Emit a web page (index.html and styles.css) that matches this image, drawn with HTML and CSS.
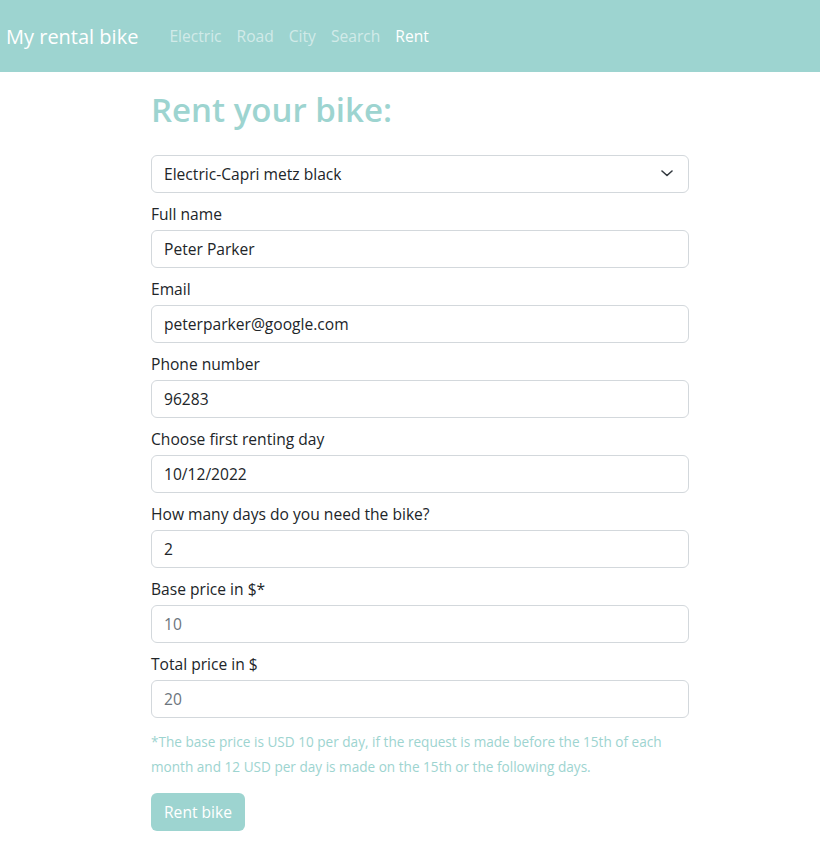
FILE: index.html
```html
<!DOCTYPE html>
<html lang="en">
<head>
<meta charset="utf-8">
<title>My rental bike</title>
<link rel="stylesheet" href="styles.css">
</head>
<body>
<nav class="navbar">
  <a class="brand" href="#">My rental bike</a>
  <ul class="nav-links">
    <li><a href="#">Electric</a></li>
    <li><a href="#">Road</a></li>
    <li><a href="#">City</a></li>
    <li><a href="#">Search</a></li>
    <li><a class="active" href="#">Rent</a></li>
  </ul>
</nav>
<main class="page">
  <h1 class="title">Rent your bike:</h1>
  <form class="form">
    <div class="select-box">
      <span>Electric-Capri metz black</span>
      <svg class="chevron" width="12" height="7" viewBox="0 0 12 7"><path d="M1 1l5 4.5L11 1" fill="none" stroke="#343a40" stroke-width="1.6" stroke-linecap="round" stroke-linejoin="round"/></svg>
    </div>
    <div class="group">
      <label class="label">Full name</label>
      <div class="input">Peter Parker</div>
    </div>
    <div class="group">
      <label class="label">Email</label>
      <div class="input">peterparker@google.com</div>
    </div>
    <div class="group">
      <label class="label">Phone number</label>
      <div class="input">96283</div>
    </div>
    <div class="group">
      <label class="label">Choose first renting day</label>
      <div class="input">10/12/2022</div>
    </div>
    <div class="group">
      <label class="label">How many days do you need the bike?</label>
      <div class="input">2</div>
    </div>
    <div class="group">
      <label class="label">Base price in $*</label>
      <div class="input readonly">10</div>
    </div>
    <div class="group">
      <label class="label">Total price in $</label>
      <div class="input readonly">20</div>
    </div>
    <p class="note">*The base price is USD 10 per day, if the request is made before the 15th of each month and 12 USD per day is made on the 15th or the following days.</p>
    <button type="button" class="btn">Rent bike</button>
  </form>
</main>
</body>
</html>
```
FILE: styles.css
```css
* { box-sizing: border-box; }
body {
  margin: 0;
  font-family: "Open Sans", "Noto Sans", sans-serif;
  font-size: 15.6px;
  color: #212529;
  background: #fff;
}
.navbar {
  height: 72px;
  background: #9dd4d0;
  display: flex;
  align-items: center;
  padding: 0 6px;
}
.brand {
  color: #fff;
  font-size: 20px;
  text-decoration: none;
  margin-right: 31px;
}
.nav-links {
  list-style: none;
  margin: 0;
  padding: 0;
  display: flex;
  gap: 15px;
}
.nav-links a {
  color: rgba(255,255,255,0.55);
  text-decoration: none;
  font-size: 15.6px;
}
.nav-links a.active { color: #fff; }
.page {
  width: 538px;
  margin-left: 151px;
  padding-top: 18px;
}
.title {
  margin: 0 0 25px;
  font-size: 33px;
  font-weight: 600;
  line-height: 1.2;
  color: #9dd4d0;
}
.form { display: flex; flex-direction: column; }
.select-box, .input {
  height: 38px;
  border: 1px solid #d3d8dc;
  border-radius: 6px;
  padding: 0 12px;
  display: flex;
  align-items: center;
  font-size: 15.6px;
  color: #212529;
}
.select-box { justify-content: space-between; margin-bottom: 9px; }
.chevron { margin-right: 3px; }
.group { display: flex; flex-direction: column; margin-bottom: 9px; }
.label {
  display: block;
  line-height: 24px;
  margin-bottom: 4px;
}
.input.readonly { color: #6c757d; }
.note {
  margin: 2px 0 14px;
  font-size: 13.6px;
  line-height: 25px;
  color: #9dd4d0;
}
.btn {
  align-self: flex-start;
  width: 94px;
  height: 38px;
  border: none;
  border-radius: 6px;
  background: #9dd4d0;
  color: #fff;
  font-family: inherit;
  font-size: 15.6px;
  padding: 0;
}
```
